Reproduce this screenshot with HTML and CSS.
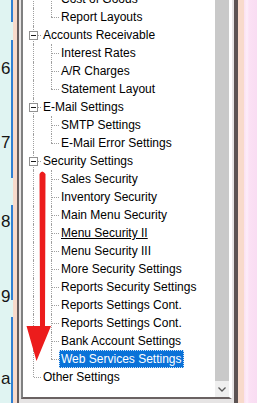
FILE: index.html
```html
<!DOCTYPE html>
<html lang="en">
<head>
  <meta charset="UTF-8">
  <title>Settings Tree</title>
  <link rel="stylesheet" href="styles.css">
</head>
<body>
  <div class="screen">
    <div class="nums">
      <span class="num n6">6</span>
      <span class="num n7">7.</span>
      <span class="num n8">8</span>
      <span class="num n9">9</span>
      <span class="num na">a.</span>
    </div>
    <div class="tabbar"></div>
    <div class="peach"></div>

    <div class="window">
      <div class="panel">
        <div class="tree">
          <div class="row l2"><span class="label">Cost of Goods</span></div>
          <div class="row l2 last"><span class="label">Report Layouts</span></div>
          <div class="row l1"><i class="box"></i><span class="label">Accounts Receivable</span></div>
          <div class="row l2"><span class="label">Interest Rates</span></div>
          <div class="row l2"><span class="label">A/R Charges</span></div>
          <div class="row l2 last"><span class="label">Statement Layout</span></div>
          <div class="row l1"><i class="box"></i><span class="label">E-Mail Settings</span></div>
          <div class="row l2"><span class="label">SMTP Settings</span></div>
          <div class="row l2 last"><span class="label">E-Mail Error Settings</span></div>
          <div class="row l1"><i class="box"></i><span class="label">Security Settings</span></div>
          <div class="row l2"><span class="label">Sales Security</span></div>
          <div class="row l2"><span class="label">Inventory Security</span></div>
          <div class="row l2"><span class="label">Main Menu Security</span></div>
          <div class="row l2 hot"><span class="label">Menu Security II</span></div>
          <div class="row l2"><span class="label">Menu Security III</span></div>
          <div class="row l2"><span class="label">More Security Settings</span></div>
          <div class="row l2"><span class="label">Reports Security Settings</span></div>
          <div class="row l2"><span class="label">Reports Settings Cont.</span></div>
          <div class="row l2"><span class="label">Reports Settings Cont.</span></div>
          <div class="row l2"><span class="label">Bank Account Settings</span></div>
          <div class="row l2 last sel"><span class="label">Web Services Settings</span></div>
          <div class="row l1 end"><span class="label">Other Settings</span></div>
        </div>
        <div class="scroll">
          <div class="thumb"></div>
          <div class="down">
            <svg width="8" height="5" viewBox="0 0 8 5"><path d="M0.5 0.5 L4 4 L7.5 0.5" fill="none" stroke="#5a5a5a" stroke-width="1.3"/></svg>
          </div>
        </div>
      </div>
    </div>

    <div class="peach right"></div>
    <div class="pink"></div>

    <!-- red marker drawn over the tree -->
    <svg class="arrow" width="257" height="403" viewBox="0 0 257 403">
      <path d="M39.5 174 Q42 169 45.5 174 L45 326 L51 326 L36.5 361 L26.5 326 L40 326 Z" fill="#ec1c1c"/>
    </svg>
  </div>
</body>
</html>
```

FILE: styles.css
```css
html, body { margin: 0; padding: 0; }
body { width: 257px; height: 403px; overflow: hidden; background: #fff; font-family: "Liberation Sans", Arial, sans-serif; }

.screen { position: relative; display: flex; width: 257px; height: 403px; }

.nums { width: 11px; background: #e0f4f2; display: flex; flex-direction: column; }
.num { display: block; height: 17px; line-height: 17px; font-size: 17px; color: #151515; padding-left: 1px; }
.n6 { margin-top: 60px; }
.n7 { margin-top: 57px; }
.n8 { margin-top: 62px; }
.n9 { margin-top: 58px; }
.na { margin-top: 65px; }

/* blue tab markers beside the numbers, broken in a few places */
.tabbar {
  width: 2px;
  background: linear-gradient(to bottom,
    #2f7fd3 0, #2f7fd3 22px, #e0f4f2 22px, #e0f4f2 40px,
    #2f7fd3 40px, #2f7fd3 178px, #e0f4f2 178px, #e0f4f2 205px,
    #2f7fd3 205px, #2f7fd3 300px, #e0f4f2 300px, #e0f4f2 317px,
    #2f7fd3 317px);
}

.peach { width: 4px; background: #f8dacb; }
.peach.right { width: 6px; }
.pink { width: 13px; background: linear-gradient(to right, #fbe0ef 0, #fdeefa 3px, #fbe1f4 5px, #f9dcf2 13px); }

.window { display: flex; background: #e6e4e4; border-left: 2px solid #675d5d; border-right: 4px solid #5c5353; padding: 0 2px 4px 2px; }
.panel { display: flex; height: 397px; background: #fff; border-left: 2px solid #808080; border-right: 3px solid #fff; border-bottom: 2px solid #6a6262; overflow: hidden; }

.tree { width: 192px; margin-top: -10px; overflow: hidden; }

.row { position: relative; height: 18px; line-height: 18px; font-size: 12px; color: #000; white-space: nowrap; }
.row::before { content: ""; position: absolute; left: 10px; top: 0; height: 18px; border-left: 1px dotted #a0a0a0; }
.row.end::before { height: 9px; }
.l2::after { content: ""; position: absolute; left: 28px; top: 0; height: 18px; border-left: 1px dotted #a0a0a0; }
.l2.last::after { height: 9px; }

.label { position: relative; display: inline-block; height: 18px; padding: 0 2px; }
.l1 .label { margin-left: 18px; }
.l2 .label { margin-left: 36px; }
.label::before { content: ""; position: absolute; right: 100%; top: 9px; width: 8px; border-top: 1px dotted #a0a0a0; }
.l1 .label::before { width: 7px; }

.box { position: absolute; left: 6px; top: 5px; width: 9px; height: 9px; box-sizing: border-box; border: 1px solid #919191; background: #fff; z-index: 1; }
.box::after { content: ""; position: absolute; left: 1px; top: 3px; width: 5px; height: 1px; background: #1a1a1a; }

.hot .label { text-decoration: underline; }
.sel .label { background: #0a72d8; color: #fff; outline: 1px dotted #cfe2f7; outline-offset: -1px; }

.scroll { width: 14px; display: flex; flex-direction: column; }
.thumb { flex: 1; background: #c9c9c9; }
.down { height: 16px; background: #efefef; display: flex; align-items: center; justify-content: center; }

.arrow { position: absolute; left: 0; top: 0; pointer-events: none; }
```
